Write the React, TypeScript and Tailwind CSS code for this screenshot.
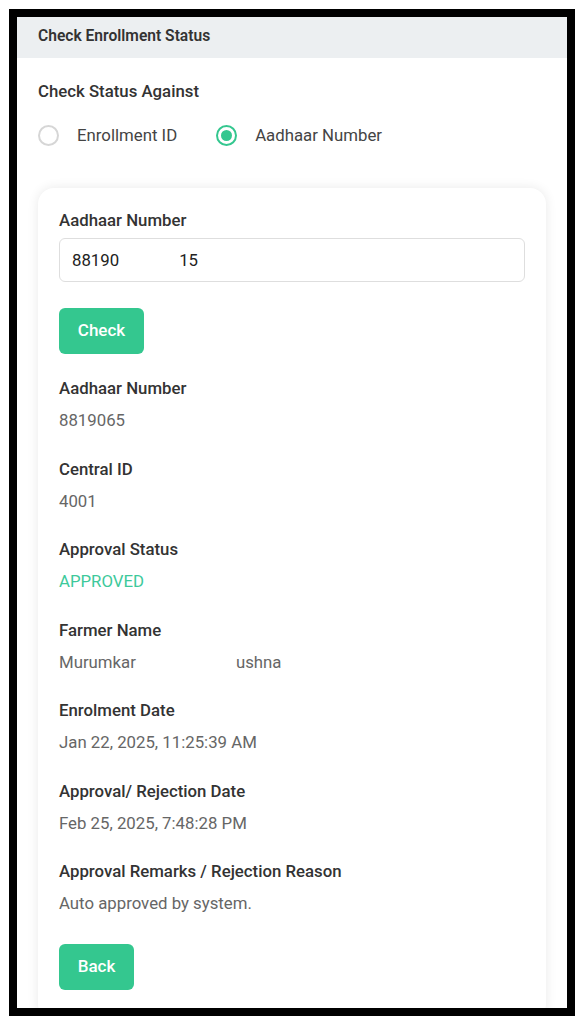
import React from "react"

const fields = [
  { label: "Aadhaar Number", value: <>8819065<span className="inline-block w-[60px]" /></> },
  { label: "Central ID", value: <>4001<span className="inline-block w-[60px]" /></> },
  { label: "Approval Status", value: <span className="text-[#3dc99b]">APPROVED</span> },
  { label: "Farmer Name", value: <>Murumkar<span className="inline-block w-[100px]" />ushna</> },
  { label: "Enrolment Date", value: "Jan 22, 2025, 11:25:39 AM" },
  { label: "Approval/ Rejection Date", value: "Feb 25, 2025, 7:48:28 PM" },
  { label: "Approval Remarks / Rejection Reason", value: "Auto approved by system." },
]

function Radio({ checked, label }: { checked?: boolean; label: string }) {
  return (
    <label className="flex items-center gap-[18px]">
      <span
        className={`flex h-[21px] w-[21px] items-center justify-center rounded-full border-2 ${
          checked ? "border-[#34c78f]" : "border-[#d6d6d6]"
        }`}
      >
        {checked && <span className="h-[11px] w-[11px] rounded-full bg-[#34c78f]" />}
      </span>
      <span className="text-[16.8px] text-[#444]">{label}</span>
    </label>
  )
}

export default function App() {
  return (
    <div className="min-h-screen bg-white p-[9px]" style={{ fontFamily: "Roboto, 'Noto Sans', sans-serif" }}>
      <div className="h-[1007px] overflow-hidden border-[8px] border-black bg-white">
        <div className="flex h-[41px] items-center bg-[#eceff1] px-[21px] pb-[2px] text-[15.6px] font-semibold text-[#333]">
          Check Enrollment Status
        </div>

        <div className="px-[21px]">
          <div className="mt-[21px] text-[16.8px] leading-6 font-medium text-[#333]">Check Status Against</div>
          <div className="mt-[20px] flex items-center gap-[39px]">
            <Radio label="Enrollment ID" />
            <Radio checked label="Aadhaar Number" />
          </div>

          <div className="mt-[40px] rounded-[16px] bg-white px-[21px] pt-[20px] pb-[30px] shadow-[0_0_12px_rgba(0,0,0,0.09)]">
            <div className="text-[16.8px] leading-6 font-medium text-[#333]">Aadhaar Number</div>
            <div className="mt-[6px] flex h-[44px] items-center rounded-[6px] border border-[#dedede] px-[12px] text-[16.8px] text-[#222]">
              88190<span className="inline-block w-[60px]" />15
            </div>
            <button className="mt-[26px] h-[46px] w-[85px] rounded-[6px] bg-[#34c78f] text-[17px] font-medium text-white">
              Check
            </button>

            <div className="mt-[22px]">
              {fields.map((f) => (
                <div key={f.label} className="pb-[24.5px]">
                  <div className="text-[16.8px] leading-6 font-medium text-[#333]">{f.label}</div>
                  <div className="mt-[8px] text-[16.8px] leading-6 text-[#666]">{f.value}</div>
                </div>
              ))}
            </div>

            <button className="mt-[4px] h-[46px] w-[75px] rounded-[6px] bg-[#34c78f] text-[17px] font-medium text-white">
              Back
            </button>
          </div>
        </div>
      </div>
    </div>
  )
}
